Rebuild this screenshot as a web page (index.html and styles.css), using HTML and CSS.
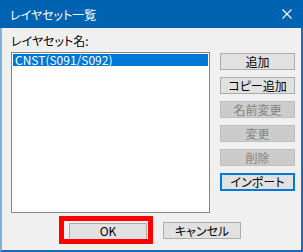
FILE: index.html
```html
<!DOCTYPE html>
<html lang="ja">
<head>
    <meta charset="UTF-8">
    <meta name="viewport" content="width=device-width, initial-scale=1.0">
    <title>レイヤセット一覧</title>
    <link rel="stylesheet" href="styles.css">
</head>
<body>
    <div class="window">
        <div class="titlebar">
            <span class="title">レイヤセット一覧</span>
            <svg class="close" width="10" height="10" viewBox="0 0 10 10">
                <path d="M0.5 0.5L9.5 9.5M9.5 0.5L0.5 9.5" stroke="#fff" stroke-width="1.1" fill="none"/>
            </svg>
        </div>
        <div class="content">
            <div class="label">レイヤセット名:</div>
            <div class="main">
                <div class="list">
                    <div class="item selected">CNST(S091/S092)</div>
                </div>
                <div class="side">
                    <button class="btn">追加</button>
                    <button class="btn">コピー追加</button>
                    <button class="btn" disabled>名前変更</button>
                    <button class="btn" disabled>変更</button>
                    <button class="btn" disabled>削除</button>
                    <button class="btn focus">インポート</button>
                </div>
            </div>
            <div class="footer">
                <span class="ok-wrap"><button class="btn">OK</button></span>
                <button class="btn">キャンセル</button>
            </div>
        </div>
    </div>
</body>
</html>
```

FILE: styles.css
```css
body { margin: 0; background: #f0f0f0; font-family: "Noto Sans CJK JP", "Noto Sans", sans-serif; font-size: 12px; font-feature-settings: "palt" 1; }
.window { width: 303px; height: 252px; display: flex; flex-direction: column; box-sizing: border-box; }
.titlebar { height: 28px; background: #0063b1; color: #fff; display: flex; align-items: center; padding: 0 11px 0 10px; }
.title { flex: 1; font-size: 12px; }
.close { display: block; }
.content { flex: 1; border-left: 2px solid #7fb0dc; border-right: 2px solid #1e6ab5; border-bottom: 2px solid #1e6ab5; padding: 5px 0 0 9px; }
.label { height: 16px; line-height: 16px; margin-bottom: 3px; color: #000; }
.main { display: flex; gap: 10px; }
.list { width: 199px; height: 161px; box-sizing: border-box; border: 1px solid #828790; background: #fff; padding: 1px; }
.item { height: 12px; line-height: 12px; padding-left: 2px; font-size: 12px; }
.selected { background: #0078d7; color: #fff; }
.side { display: flex; flex-direction: column; gap: 7px; padding-top: 1px; }
.btn { width: 75px; height: 17px; box-sizing: border-box; border: 1px solid #adadad; background: #e1e1e1; color: #000; font-family: inherit; font-size: 12px; font-feature-settings: "palt" 1; padding: 0; line-height: 14px; }
.btn:disabled { background: #cccccc; border-color: #bfbfbf; color: #838383; }
.btn.focus { border: 2px solid #0078d7; height: 18px; }
.footer { display: flex; gap: 16px; padding: 9px 0 0 58px; }
.footer .btn { width: 78px; }
.ok-wrap { position: relative; display: block; height: 17px; }
.ok-wrap::after { content: ""; position: absolute; left: -10px; right: -6px; top: -6px; bottom: -5px; border: 5px solid #ff0000; }
```
